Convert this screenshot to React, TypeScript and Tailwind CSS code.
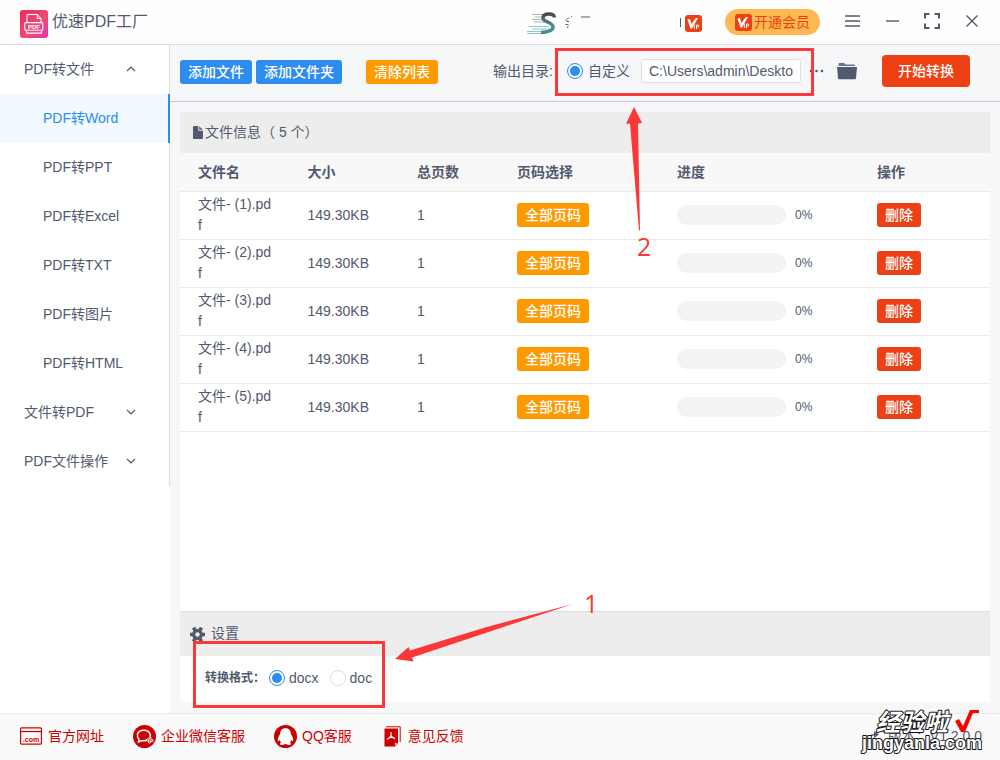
import { useState } from 'react'
import clsx from 'clsx'

const SUB_ITEMS = ['PDF转Word', 'PDF转PPT', 'PDF转Excel', 'PDF转TXT', 'PDF转图片', 'PDF转HTML']

const FILES = [1, 2, 3, 4, 5].map((n) => ({
  id: n,
  name: `文件- (${n}).pdf`,
  size: '149.30KB',
  pages: 1,
  progress: 0,
}))

function LogoIcon() {
  return (
    <svg width="28" height="28" viewBox="0 0 28 28" aria-hidden="true">
      <defs>
        <linearGradient id="logo" x1="0" y1="0" x2="1" y2="1">
          <stop offset="0" stopColor="#e62e5c" />
          <stop offset="0.6" stopColor="#ee4a78" />
          <stop offset="1" stopColor="#ea2fae" />
        </linearGradient>
      </defs>
      <rect width="28" height="28" rx="3" fill="url(#logo)" />
      <g fill="none" stroke="#fff" strokeWidth="1.1" strokeLinejoin="round">
        <path d="M7 12.5V5.2q0-.7.7-.7h9.6l3.7 4v4" />
        <path d="M17.3 4.8v3.7H21" />
        <rect x="4.8" y="12.6" width="18" height="7.6" rx="1" />
        <path d="M6.5 20.5v2.6h15v-2.6" />
      </g>
      <text x="13.9" y="18.9" textAnchor="middle" fontSize="6" fontWeight="700" fill="#fff">PDF</text>
    </svg>
  )
}

function AvatarIcon() {
  return (
    <svg width="30" height="24" viewBox="0 0 30 24" aria-hidden="true">
      <defs>
        <linearGradient id="avatar" x1="0" y1="0" x2="0" y2="1">
          <stop offset="0" stopColor="#43474f" />
          <stop offset="0.5" stopColor="#52848c" />
          <stop offset="1" stopColor="#3f8f95" />
        </linearGradient>
      </defs>
      <g stroke="#a9b6ba" strokeWidth="1">
        <path d="M5 3.500h12M8 6h8M5 8.500h11M7 11h12" />
        <path d="M2 15.500h20M5 18h18M0 20.500h22M0 22.500h18" stroke="#93c9cb" />
      </g>
      <path
        d="M27.500 6.500Q27 3 22 3c-4 0-6 1.500-6 4 0 4.500 10 4 10 9 0 3.500-4 5-12 5.500"
        fill="none"
        stroke="url(#avatar)"
        strokeWidth="3.500"
      />
    </svg>
  )
}

// account name, mostly hidden by its mask
function MaskedName() {
  return (
    <svg width="118" height="16" viewBox="0 0 118 16" fill="none" stroke="#515a6e" aria-hidden="true">
      <path d="M4 2.500L.5 6M1.500 6.500h2.500M.5 9.500h3M3.500 11l-1.500 2M6 2l1-.5M16 2h9" />
      <path d="M115.500 3v9" />
    </svg>
  )
}

function VipIcon() {
  return (
    <svg width="17" height="17" viewBox="0 0 17 17" aria-hidden="true">
      <rect width="17" height="17" rx="3" fill="#ed4014" />
      <path d="M2.500 4.500l2.500-.5 1.500 5L10.800 3H13L7 13.500H5.500z" fill="#fff" />
      <path d="M9.300 9.500v4.500M11.500 14V10h1.200q1.200 0 1.200 1t-1.200 1h-1.200" fill="none" stroke="#fff" strokeWidth="1" />
    </svg>
  )
}

function Chevron({ up = false }: { up?: boolean }) {
  return (
    <svg width="10" height="6" viewBox="0 0 10 6" fill="none" stroke="#515a6e" strokeWidth="1.200" aria-hidden="true">
      <path d={up ? 'M1 5l4-4 4 4' : 'M1 1l4 4 4-4'} />
    </svg>
  )
}

function FileIcon() {
  return (
    <svg width="10" height="13" viewBox="0 0 10 13" fill="#515a6e" aria-hidden="true">
      <path d="M0 1q0-1 1-1h4.300v4.700H10V12q0 1-1 1H1q-1 0-1-1z" />
      <path d="M6.200.2L9.800 3.800H6.200z" />
    </svg>
  )
}

function FolderIcon() {
  return (
    <svg width="20" height="18" viewBox="0 0 20 18" fill="#515a6e" aria-hidden="true">
      <path d="M1.500 4V2q0-1 1-1h4.700l1.300 1.500H17q1 0 1 1V4z" opacity="0.850" />
      <path d="M0 5h20l-1 11.200q-.1 1-1 1H2q-.9 0-1-1z" />
    </svg>
  )
}

function GearIcon() {
  return (
    <svg width="15" height="15" viewBox="0 0 15 15" aria-hidden="true">
      <g stroke="#515a6e" strokeWidth="3.600">
        <path d="M3.500.6l8 13.800M11.500.6l-8 13.800M0 7.500h15" />
      </g>
      <circle cx="7.500" cy="7.500" r="5.400" fill="#515a6e" />
      <circle cx="7.500" cy="7.500" r="2.200" fill="#ededed" />
    </svg>
  )
}

function WebIcon() {
  return (
    <svg width="22" height="18" viewBox="0 0 22 18" aria-hidden="true">
      <rect x="0.600" y="0.800" width="20.800" height="16.400" rx="1" fill="none" stroke="#c00" strokeWidth="1.200" />
      <path d="M1 4.500h20" stroke="#c00" strokeWidth="1.200" />
      <text x="11" y="14.500" textAnchor="middle" fontSize="7" fontWeight="700" fill="#c00">.com</text>
    </svg>
  )
}

function WechatIcon() {
  return (
    <svg width="23" height="23" viewBox="0 0 23 23" aria-hidden="true">
      <circle cx="11.500" cy="11.500" r="11.500" fill="#c00" />
      <g fill="none" stroke="#fff" strokeWidth="1.500">
        <path d="M14 15q-3 1.300-5.500.6L5.500 17l.5-2.700Q3.800 12 4.500 9.300q1.200-4 6.300-4 5.500 0 6.500 4.500.1 1-.2 2" />
      </g>
      <g fill="none" stroke="#fff" strokeWidth="1">
        <circle cx="17" cy="13" r="1.100" />
        <circle cx="19" cy="15.500" r="1.100" />
        <circle cx="16.500" cy="17" r="1.100" />
        <circle cx="14.500" cy="15" r="1.100" />
      </g>
    </svg>
  )
}

function QQIcon() {
  return (
    <svg width="23" height="23" viewBox="0 0 23 23" aria-hidden="true">
      <circle cx="11.500" cy="11.500" r="11.500" fill="#c00" />
      <path
        d="M11.500 3.200c-3.800 0-5.500 2.700-5.400 6C5 10.700 3.600 13 3.800 15.500c.1 1.300 1 .8 1.800-.4.300 1 .8 1.700 1.500 2.300-1.200.5-1.500 2-.2 2.300 1.400.4 3.400.1 4.600-.6 1.200.7 3.200 1 4.600.6 1.300-.3 1-1.800-.2-2.300.7-.6 1.200-1.300 1.500-2.300.8 1.200 1.700 1.700 1.800.4.200-2.500-1.200-4.800-2.300-6.300.1-3.300-1.600-6-5.400-6z"
        fill="#fff"
      />
    </svg>
  )
}

function FeedbackIcon() {
  return (
    <svg width="17" height="21" viewBox="0 0 17 21" aria-hidden="true">
      <path d="M2 .8h14.200V16" fill="none" stroke="#c00" strokeWidth="1" />
      <path d="M.5 2.500h13.500V16l-3.500 4.500H.5z" fill="#c00" />
      <path d="M10.500 20.500V16.500H14z" fill="#fafafa" stroke="#c00" strokeWidth="0.800" />
      <path d="M7 6v3.500q1 2.300 4 3.500M7 9.500Q6 12 3 13.500M4.500 12q3-1.200 6-.2" fill="none" stroke="#fff" strokeWidth="1.100" />
    </svg>
  )
}

function Header() {
  return (
    <header className="flex h-[45px] shrink-0 items-center border-b border-[#dcdee2] bg-[#fefefe] pl-5 pr-[21px]">
      <div className="flex items-center gap-1 pt-1">
        <LogoIcon />
        <h1 className="pb-1 text-base">优速PDF工厂</h1>
      </div>
      <div className="ml-auto flex items-center">
        <div className="flex items-center pt-0.5">
          <AvatarIcon />
          <div className="ml-2">
            <MaskedName />
          </div>
          <div className="ml-0.5">
            <VipIcon />
          </div>
        </div>
        <button className="ml-[23px] flex h-[26px] items-center gap-0.5 rounded-full bg-[#ffb951] px-2.5 text-sm text-[#ed4014]">
          <VipIcon />
          开通会员
        </button>
        <div className="flex items-center pb-0.5">
          <button aria-label="菜单" className="ml-6">
            <svg width="17" height="12" viewBox="0 0 17 12" stroke="#515a6e" strokeWidth="1.400">
              <path d="M1 1h15M1 6h15M1 11h15" />
            </svg>
          </button>
          <button aria-label="最小化" className="ml-6">
            <svg width="15" height="12" viewBox="0 0 15 12" stroke="#515a6e" strokeWidth="1.400">
              <path d="M1 6h13" />
            </svg>
          </button>
          <button aria-label="最大化" className="ml-6">
            <svg width="16" height="16" viewBox="0 0 16 16" fill="none" stroke="#515a6e" strokeWidth="2">
              <path d="M1 5.500V1h4.500M10.500 1H15v4.500M15 10.500V15h-4.500M5.500 15H1v-4.500" />
            </svg>
          </button>
          <button aria-label="关闭" className="ml-[25px]">
            <svg width="14" height="14" viewBox="0 0 14 14" stroke="#515a6e" strokeWidth="1.400">
              <path d="M1.500 1.500l11 11M12.500 1.500l-11 11" />
            </svg>
          </button>
        </div>
      </div>
    </header>
  )
}

function Sidebar() {
  const [active, setActive] = useState('PDF转Word')
  const group = 'flex h-[49px] w-full items-center justify-between pb-0.5 pl-6 pr-[33px]'

  return (
    <aside className="w-[170px] shrink-0 bg-white">
      <nav className="border-r border-[#dcdee2]">
        <button className={group}>
          PDF转文件
          <Chevron up />
        </button>
        {SUB_ITEMS.map((item) => (
          <a
            key={item}
            href="#"
            onClick={() => setActive(item)}
            className={clsx(
              '-mr-px flex h-[49px] items-center pb-0.5 pl-[43px]',
              item === active && 'border-r-2 border-[#2d8cf0] bg-[#f0faff] text-[#2d8cf0]',
            )}
          >
            {item}
          </a>
        ))}
        <button className={group}>
          文件转PDF
          <Chevron />
        </button>
        <button className={group}>
          PDF文件操作
          <Chevron />
        </button>
      </nav>
    </aside>
  )
}

const radioClass =
  'size-4 shrink-0 appearance-none rounded-full border border-[#dcdee2] bg-white bg-clip-content p-0.5 checked:border-[#2d8cf0] checked:bg-[#2d8cf0]'

function Toolbar() {
  return (
    <div className="flex h-[57px] shrink-0 items-center border-b border-[#c5c8ce] pb-1 pl-2.5 pr-[30px]">
      <div className="flex pt-0.5 font-medium text-white">
        <button className="h-6 rounded-[3px] bg-[#2d8cf0] px-2">添加文件</button>
        <button className="ml-1 h-6 rounded-[3px] bg-[#2d8cf0] px-2">添加文件夹</button>
        <button className="ml-6 h-6 rounded-[3px] bg-[#ff9900] px-2">清除列表</button>
      </div>
      <div className="ml-auto flex items-center">
        <span>输出目录:</span>
        <label className="ml-3.5 flex items-center gap-[5px]">
          <input type="radio" name="output" defaultChecked className={radioClass} />
          自定义
        </label>
        <input
          type="text"
          aria-label="输出目录"
          defaultValue="C:\Users\admin\Deskto"
          className="ml-[11px] h-6 w-40 rounded-[3px] border border-[#dcdee2] bg-white px-[7px]"
        />
        <button aria-label="浏览" className="ml-2">
          <svg width="15" height="4" viewBox="0 0 15 4" fill="#515a6e">
            <circle cx="2" cy="2" r="1.300" />
            <circle cx="7.500" cy="2" r="1.300" />
            <circle cx="13" cy="2" r="1.300" />
          </svg>
        </button>
        <button aria-label="打开文件夹" className="ml-[13px]">
          <FolderIcon />
        </button>
        <button className="ml-[25px] h-8 rounded-[4px] bg-[#ed4014] px-4 font-medium text-white">开始转换</button>
      </div>
    </div>
  )
}

function FileTable() {
  return (
    <table className="w-full table-fixed text-left">
      <colgroup>
        <col />
        <col />
        <col className="w-[100px]" />
        <col className="w-40" />
        <col className="w-[200px]" />
        <col className="w-[131px]" />
      </colgroup>
      <thead>
        <tr className="h-[38px] border-b border-[#e8eaec] bg-[#f8f8f9]">
          {['文件名', '大小', '总页数', '页码选择', '进度', '操作'].map((title) => (
            <th key={title} className="px-[18px] font-bold">
              {title}
            </th>
          ))}
        </tr>
      </thead>
      <tbody>
        {FILES.map((file) => (
          <tr key={file.id} className="h-12 border-b border-[#e8eaec]">
            <td className="break-all px-[18px] leading-[21px]">{file.name}</td>
            <td className="px-[18px]">{file.size}</td>
            <td className="px-[18px]">{file.pages}</td>
            <td className="px-[18px]">
              <button className="block h-6 rounded-[3px] bg-[#ff9900] px-2 font-medium text-white">全部页码</button>
            </td>
            <td className="px-[18px]">
              <div className="flex items-center gap-[9px]">
                <div className="h-5 w-[109px] overflow-hidden rounded-full bg-[#f3f3f3]">
                  <div className="h-full bg-[#2d8cf0]" style={{ width: `${file.progress}%` }} />
                </div>
                <span className="text-xs">{file.progress}%</span>
              </div>
            </td>
            <td className="px-[18px]">
              <button className="block h-6 rounded-[3px] bg-[#ed4014] px-2 font-medium text-white">删除</button>
            </td>
          </tr>
        ))}
      </tbody>
    </table>
  )
}

function Settings() {
  return (
    <section>
      <div className="flex h-[45px] items-center gap-1.5 border-t border-[#dcdee2] bg-[#ededed] pl-2.5">
        <GearIcon />
        <h2 className="pb-0.5">设置</h2>
      </div>
      <div className="flex h-[46px] items-center bg-white pb-0.5 pl-[25px]">
        <span className="w-16 text-xs font-bold">转换格式：</span>
        {['docx', 'doc'].map((format) => (
          <label key={format} className="mr-[11px] flex items-center gap-1">
            <input type="radio" name="format" defaultChecked={format === 'docx'} className={radioClass} />
            {format}
          </label>
        ))}
      </div>
    </section>
  )
}

function Footer() {
  return (
    <footer className="relative flex h-[47px] shrink-0 items-center border-t border-[#e8eaec] bg-[#fafafa] pb-0.5 pl-5 pr-[18px] text-[#c00]">
      <a href="#" className="flex items-center gap-1.5">
        <WebIcon />
        官方网址
      </a>
      <a href="#" className="ml-[29px] flex items-center gap-[5px]">
        <WechatIcon />
        企业微信客服
      </a>
      <a href="#" className="ml-[29px] flex items-center gap-[5px]">
        <QQIcon />
        QQ客服
      </a>
      <a href="#" className="ml-8 flex items-center gap-[7px]">
        <FeedbackIcon />
        意见反馈
      </a>
      <span className="ml-auto flex items-center gap-2 text-[#515a6e]">
        <svg width="13" height="12" viewBox="0 0 13 12" aria-hidden="true">
          <path d="M1 11Q1 5 8 4.500" fill="none" stroke="#515a6e" strokeWidth="1.500" />
          <path d="M7 1l5 3.500L7 8z" fill="#515a6e" />
        </svg>
        版本：V1.2.0.0
      </span>
      <svg width="130" height="50" viewBox="0 0 130 50" className="absolute -top-2 right-3" aria-hidden="true">
        <g fill="#fff" stroke="#111" strokeWidth="2" strokeLinejoin="round" paintOrder="stroke" fontWeight="700">
          <text x="18" y="25" fontSize="24" fontStyle="italic">经验啦</text>
          <text x="4" y="43" fontSize="18">jingyanla.com</text>
        </g>
        <path d="M97 15l4-2 4 7 7-16h9v3h-6l-8 19h-4z" fill="#f00" />
      </svg>
    </footer>
  )
}

function Annotations() {
  return (
    <svg
      width="1000"
      height="760"
      viewBox="0 0 1000 760"
      className="pointer-events-none absolute left-0 top-0"
      aria-hidden="true"
    >
      <g fill="none" stroke="#fc3737" strokeWidth="3">
        <rect x="556.500" y="49.500" width="256" height="45" />
        <rect x="194.500" y="642.500" width="189" height="64" />
      </g>
      <g fill="#fc3737">
        <path d="M634 107l8 16-4 .5 2 107h-1l-9-107-4 .5z" />
        <path d="M395 659l13.500-12 1.500 3.500L485 627.500 573 604 490 631.500 412 657.500l1.500 4z" />
        <g fontSize="25" fontFamily="'Open Sans', sans-serif">
          <text x="637" y="256">2</text>
          <text x="584" y="613">1</text>
        </g>
      </g>
    </svg>
  )
}

export default function App() {
  return (
    <div className="relative flex min-h-screen flex-col overflow-hidden bg-[#f5f7f9] font-['Liberation_Sans','Noto_Sans_CJK_SC',sans-serif] text-sm text-[#515a6e]">
      <Header />
      <div className="flex flex-1">
        <Sidebar />
        <main className="flex min-w-0 flex-1 flex-col">
          <Toolbar />
          <div className="mx-2.5 mb-[11px] mt-2.5 flex flex-1 flex-col">
            <section className="flex-1 bg-white">
              <div className="flex h-[41px] items-center gap-0.5 bg-[#ededed] pl-[13px]">
                <FileIcon />
                <h2 className="pb-0.5">文件信息（ 5 个）</h2>
              </div>
              <FileTable />
            </section>
            <Settings />
          </div>
        </main>
      </div>
      <Footer />
      <Annotations />
    </div>
  )
}
